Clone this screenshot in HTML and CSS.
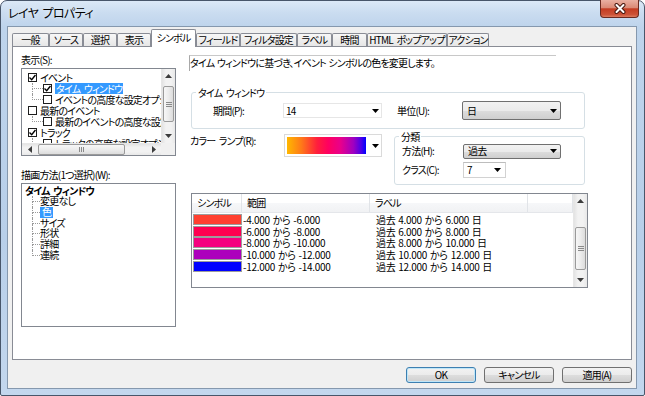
FILE: index.html
```html
<!DOCTYPE html>
<html lang="ja">
<head>
<meta charset="utf-8">
<title>レイヤ プロパティ</title>
<link rel="stylesheet" href="styles.css">
</head>
<body>
<div class="window">
  <div class="titlebar">
    <span class="title">レイヤ プロパティ</span>
    <div class="close">
      <svg width="14" height="11" viewBox="0 0 14 11"><path d="M3.5 2 L10.5 9 M10.5 2 L3.5 9" stroke="#4a1a12" stroke-width="4" stroke-linecap="round"/><path d="M3.5 2 L10.5 9 M10.5 2 L3.5 9" stroke="#fff" stroke-width="2" stroke-linecap="round"/></svg>
    </div>
  </div>
  <div class="client">
    <div class="tabs">
      <div class="tab tw37">一般</div>
      <div class="tab tw34">ソース</div>
      <div class="tab tw34">選択</div>
      <div class="tab tw34">表示</div>
      <div class="tab tw45 active">シンボル</div>
      <div class="tab tw44">フィールド</div>
      <div class="tab tw57">フィルタ設定</div>
      <div class="tab tw35">ラベル</div>
      <div class="tab tw35">時間</div>
      <div class="tab tw80">HTML ポップアップ</div>
      <div class="tab tw42">アクション</div>
    </div>
    <div class="panel">
      <div class="left">
        <div class="lbl lbl-show">表示(S):</div>
        <div class="list list-show">
          <div class="list-content lc1">
            <div class="row"><span class="cb"><svg width="7" height="7" viewBox="0 0 7 7"><path d="M0.5 3.5 L2.7 5.7 L6.5 1" fill="none" stroke="#000" stroke-width="1.4"/></svg></span><span class="txt">イベント</span></div>
            <div class="row"><span class="conn c1"><i class="ct"></i><i class="cbm"></i></span><span class="cb"><svg width="7" height="7" viewBox="0 0 7 7"><path d="M0.5 3.5 L2.7 5.7 L6.5 1" fill="none" stroke="#000" stroke-width="1.4"/></svg></span><span class="txt sel">タイム ウィンドウ</span></div>
            <div class="row"><span class="conn c1 last"><i class="ct"></i><i class="cbm"></i></span><span class="cb"></span><span class="txt">イベントの高度な設定オプション</span></div>
            <div class="row"><span class="cb"></span><span class="txt">最新のイベント</span></div>
            <div class="row"><span class="conn c1 last"><i class="ct"></i><i class="cbm"></i></span><span class="cb"></span><span class="txt">最新のイベントの高度な設定</span></div>
            <div class="row"><span class="cb"><svg width="7" height="7" viewBox="0 0 7 7"><path d="M0.5 3.5 L2.7 5.7 L6.5 1" fill="none" stroke="#000" stroke-width="1.4"/></svg></span><span class="txt">トラック</span></div>
            <div class="row"><span class="conn c1 last"><i class="ct"></i><i class="cbm"></i></span><span class="cb"></span><span class="txt">トラックの高度な設定オプション</span></div>
          </div>
          <div class="vscroll vs1">
            <div class="sb-btn"><svg width="7" height="4" viewBox="0 0 7 4"><path d="M0 4 L3.5 0 L7 4Z" fill="#3c3c3c"/></svg></div>
            <div class="sb-track"><div class="thumb vthumb th1"><span class="grip"></span></div></div>
            <div class="sb-btn"><svg width="7" height="4" viewBox="0 0 7 4"><path d="M0 0 L3.5 4 L7 0Z" fill="#3c3c3c"/></svg></div>
          </div>
          <div class="hscroll">
            <div class="sb-btn hb"><svg width="4" height="7" viewBox="0 0 4 7"><path d="M4 0 L0 3.5 L4 7Z" fill="#3c3c3c"/></svg></div>
            <div class="sb-track htrack"><div class="thumb hthumb"><span class="grip hgrip"></span></div></div>
            <div class="sb-btn hb"><svg width="4" height="7" viewBox="0 0 4 7"><path d="M0 0 L4 3.5 L0 7Z" fill="#3c3c3c"/></svg></div>
          </div>
          <div class="corner"></div>
        </div>
        <div class="lbl lbl-draw">描画方法(1つ選択)(W):</div>
        <div class="list list-draw">
          <div class="row2 root">タイム ウィンドウ</div>
          <div class="row2"><span class="conn c2"><i class="ct"></i><i class="cbm"></i></span><span class="txt">変更なし</span></div>
          <div class="row2"><span class="conn c2"><i class="ct"></i><i class="cbm"></i></span><span class="txt sel">色</span></div>
          <div class="row2"><span class="conn c2"><i class="ct"></i><i class="cbm"></i></span><span class="txt">サイズ</span></div>
          <div class="row2"><span class="conn c2"><i class="ct"></i><i class="cbm"></i></span><span class="txt">形状</span></div>
          <div class="row2"><span class="conn c2"><i class="ct"></i><i class="cbm"></i></span><span class="txt">詳細</span></div>
          <div class="row2"><span class="conn c2 last"><i class="ct"></i><i class="cbm"></i></span><span class="txt">連続</span></div>
        </div>
      </div>

      <div class="right">
        <div class="desc">タイム ウィンドウに基づき、イベント シンボルの色を変更します。</div>

        <fieldset class="grp g1">
          <legend>タイム ウィンドウ</legend>
          <div class="g1-body">
            <span class="flbl w70">期間(P):</span>
            <div class="combo c14"><span class="val">14</span><svg width="7" height="4" viewBox="0 0 7 4"><path d="M0 0 L3.5 4 L7 0Z" fill="#000"/></svg></div>
            <span class="flbl w65 ml15">単位(U):</span>
            <div class="combo cbtn cday"><span class="val">日</span><svg width="7" height="4" viewBox="0 0 7 4"><path d="M0 0 L3.5 4 L7 0Z" fill="#000"/></svg></div>
          </div>
        </fieldset>

        <div class="row-ramp">
          <span class="ramp-lbl">カラー ランプ(R):</span>
          <div class="ramp"><span class="ramp-sw"></span><svg width="7" height="4" viewBox="0 0 7 4"><path d="M0 0 L3.5 4 L7 0Z" fill="#000"/></svg></div>
          <fieldset class="grp g2">
            <legend>分類</legend>
            <div class="g2-body">
              <div class="frow">
                <span class="flbl w61">方法(H):</span>
                <div class="combo cbtn cpast"><span class="val">過去</span><svg width="7" height="4" viewBox="0 0 7 4"><path d="M0 0 L3.5 4 L7 0Z" fill="#000"/></svg></div>
              </div>
              <div class="frow frow2">
                <span class="flbl w61">クラス(C):</span>
                <div class="combo c7"><span class="val">7</span><svg width="7" height="4" viewBox="0 0 7 4"><path d="M0 0 L3.5 4 L7 0Z" fill="#000"/></svg></div>
              </div>
            </div>
          </fieldset>
        </div>

        <div class="table">
          <div class="tmain">
            <div class="thead">
              <div class="th">シンボル</div>
              <div class="th">範囲</div>
              <div class="th">ラベル</div>
              <div class="th"></div>
            </div>
            <div class="tbody">
              <div class="trow"><span class="sw sw1"></span><span class="rng">-4.000 から -6.000</span><span class="lab">過去 4.000 から 6.000 日</span></div>
              <div class="trow"><span class="sw sw2"></span><span class="rng">-6.000 から -8.000</span><span class="lab">過去 6.000 から 8.000 日</span></div>
              <div class="trow"><span class="sw sw3"></span><span class="rng">-8.000 から -10.000</span><span class="lab">過去 8.000 から 10.000 日</span></div>
              <div class="trow"><span class="sw sw4"></span><span class="rng">-10.000 から -12.000</span><span class="lab">過去 10.000 から 12.000 日</span></div>
              <div class="trow"><span class="sw sw5"></span><span class="rng">-12.000 から -14.000</span><span class="lab">過去 12.000 から 14.000 日</span></div>
            </div>
          </div>
          <div class="vscroll vs2">
            <div class="sb-btn"><svg width="7" height="4" viewBox="0 0 7 4"><path d="M0 4 L3.5 0 L7 4Z" fill="#3c3c3c"/></svg></div>
            <div class="sb-track"><div class="thumb vthumb th2"><span class="grip"></span></div></div>
            <div class="sb-btn"><svg width="7" height="4" viewBox="0 0 7 4"><path d="M0 0 L3.5 4 L7 0Z" fill="#3c3c3c"/></svg></div>
          </div>
        </div>
      </div>
    </div>
    <div class="buttons">
      <div class="btn default">OK</div>
      <div class="btn">キャンセル</div>
      <div class="btn">適用(A)</div>
    </div>
  </div>
</div>
</body>
</html>
```

FILE: styles.css
```css
* { box-sizing: border-box; }
html, body { margin: 0; padding: 0; }
body {
  width: 645px; height: 396px; overflow: hidden;
  font-family: "Noto Sans CJK JP", "Noto Sans", sans-serif;
  font-size: 10px;
  letter-spacing: -0.8px;
  word-spacing: 2px;
  font-feature-settings: "palt";
  color: #000;
  background: #fff;
}

.window {
  width: 645px; height: 396px;
  display: flex; flex-direction: column;
  padding: 0 7px 6px 6px;
  border: 1px solid #48566a;
  border-radius: 7px 7px 2px 2px;
  background: linear-gradient(180deg, #dce9f7 0px, #cadcf0 12px, #bed4ec 26px, #b8cfe9 60%, #c3d7ee 100%);
}

.titlebar { height: 25px; display: flex; align-items: flex-start; margin-right: -2px; }
.title {
  font-size: 12px; line-height: 14px; margin: 5px 0 0 1px;
  letter-spacing: -0.6px;
  text-shadow: 0 0 6px rgba(255,255,255,0.9);
}
.close {
  margin-left: auto; margin-top: -1px;
  width: 39px; height: 18px;
  border: 1px solid #6a2a20; border-top: none;
  border-radius: 0 0 4px 4px;
  background: linear-gradient(#eab0a2 0%, #db8a76 45%, #c43c22 52%, #cc5237 85%, #dd7a5e 100%);
  display: flex; align-items: center; justify-content: center;
}

.client {
  flex: 1;
  background: #f0f0f0;
  border: 1px solid #8598ae;
  padding: 2px 4px 0 4px;
  display: flex; flex-direction: column;
}

.tabs { display: flex; align-items: flex-end; height: 17px; }
.tab {
  height: 13px; line-height: 12px;
  text-align: center;
  border: 1px solid #898c95; border-bottom: none;
  border-radius: 2px 2px 0 0;
  background: linear-gradient(#f7f7f7, #e6e6e6);
  white-space: nowrap;
  flex: none;
}
.tab.active {
  height: 18px; line-height: 15px;
  background: #fff;
  position: relative; z-index: 1;
  margin-bottom: -1px;
}
.tw34 { width: 34px; }
.tw35 { width: 35px; }
.tw37 { width: 37px; }
.tw42 { width: 42px; }
.tw44 { width: 44px; }
.tw45 { width: 45px; }
.tw57 { width: 57px; }
.tw80 { width: 80px; }

.panel {
  height: 314px;
  border: 1px solid #898c95;
  background: #fff;
  display: flex;
  padding-left: 8px;
  gap: 13px;
}

.buttons { display: flex; justify-content: flex-end; gap: 8px; margin-top: 7px; }
.btn {
  width: 70px; height: 16px;
  border: 1px solid #707070; border-radius: 3px;
  background: linear-gradient(#f2f2f2 0%, #ebebeb 50%, #dddddd 51%, #cfcfcf 100%);
  text-align: center; line-height: 14px;
}
.btn.default { border-color: #3c7fb1; box-shadow: inset 0 0 0 1px #bfe6f8; }

/* left column */
.left { width: 155px; display: flex; flex-direction: column; }
.lbl { line-height: 12px; white-space: nowrap; }
.lbl-show { margin-top: 7px; }
.lbl-draw { margin-top: 13px; }
.list { border: 1px solid #828790; background: #fff; margin-top: 2px; }
.list-show {
  height: 88px;
  display: grid;
  grid-template-columns: 1fr 14px;
  grid-template-rows: 1fr 12px;
}
.list-content { overflow: hidden; min-width: 0; min-height: 0; }
.lc1 { padding: 3px 0 0 6px; }
.row { display: flex; align-items: center; height: 11px; white-space: nowrap; }
.cb {
  width: 9px; height: 9px; flex: none;
  border: 1px solid #1e1e1e; background: #fff;
  margin-right: 3px;
  display: flex; align-items: center; justify-content: center;
}
.txt { line-height: 11px; }
.txt.sel { background: #3399ff; color: #fff; padding: 0 1px; }
.conn { display: flex; flex-direction: column; flex: none; height: 100%; }
.conn .ct { height: 6px; border-left: 1px dotted #9a9a9a; border-bottom: 1px dotted #9a9a9a; }
.conn .cbm { flex: 1; border-left: 1px dotted #9a9a9a; }
.conn.last .cbm { border-left: none; }
.c1 { width: 11px; margin-left: 4px; }
.c2 { width: 8px; margin-left: 7px; }

.list-draw { height: 144px; padding: 1.5px 0 0 3px; }
.row2 { display: flex; align-items: center; height: 10.7px; white-space: nowrap; line-height: 10.7px; }
.row2 .txt { line-height: 10.7px; }
.row2 .txt.sel { padding: 0 2px; }
.row2.root { font-weight: bold; }

/* scrollbars */
.vscroll {
  display: flex; flex-direction: column;
  background: linear-gradient(90deg, #e3e3e3, #f2f2f2 30%, #f2f2f2 70%, #e8e8e8);
  border-left: 1px solid #e6e6e6;
}
.sb-btn { height: 14px; flex: none; display: flex; align-items: center; justify-content: center; }
.sb-track { flex: 1; display: flex; flex-direction: column; }
.thumb {
  border: 1px solid #9a9a9a; border-radius: 2px;
  display: flex; align-items: center; justify-content: center;
}
.vthumb { margin: 0 1px; background: linear-gradient(90deg, #f7f7f7, #ececec 50%, #dcdcdc); }
.th1 { margin-top: 3px; height: 36px; }
.th2 { margin-top: 19px; height: 43px; }
.grip {
  width: 6px; height: 5px;
  background: repeating-linear-gradient(#8a8a8a 0 1px, transparent 1px 2px);
}
.hscroll {
  display: flex;
  background: linear-gradient(#e3e3e3, #f2f2f2 30%, #f2f2f2 70%, #e8e8e8);
  border-top: 1px solid #e6e6e6;
}
.hb { width: 15px; height: auto; }
.htrack { flex-direction: row; }
.hthumb { margin: 0 0 0 1px; width: 87px; background: linear-gradient(#f7f7f7, #ececec 50%, #dcdcdc); }
.hgrip { width: 5px; height: 5px; background: repeating-linear-gradient(90deg, #8a8a8a 0 1px, transparent 1px 2px); }
.corner { background: #f0f0f0; }

/* right column */
.right { width: 399px; display: flex; flex-direction: column; }
.desc {
  margin-top: 8px;
  width: 367px; height: 16px;
  border-top: 1px solid #c8c8c8; border-left: 1px solid #a8a8a8;
  line-height: 13px; white-space: nowrap;
  word-spacing: 1px;
}

.grp {
  margin: 0; padding: 0;
  border: 1px solid #d5dfe5; border-radius: 3px;
  min-width: 0;
}
.grp legend { margin-left: 4px; padding: 0 2px; line-height: 13px; }
.g1 { margin: 15px 0 0 2px; width: 394px; }
.g1-body { display: flex; align-items: center; height: 19px; margin: 2px 0 8px 0; padding-left: 21px; }
.flbl { white-space: nowrap; line-height: 12px; flex: none; }
.w70 { width: 70px; }
.w65 { width: 65px; }
.w61 { width: 61px; }
.ml15 { margin-left: 15px; }

.combo { display: flex; align-items: center; flex: none; }
.combo .val { flex: 1; line-height: 12px; }
.c14 { width: 99px; height: 15px; border: 1px solid #e6e6e6; padding: 0 2px 0 2px; }
.cbtn {
  border: 1px solid #707070; border-radius: 2px;
  background: linear-gradient(#f2f2f2 0%, #ebebeb 50%, #dddddd 51%, #cfcfcf 100%);
  padding: 0 3px 0 4px;
}
.cday { width: 99px; height: 19px; }
.cpast { width: 98px; height: 15px; }
.c7 { width: 43px; height: 16px; border: 1px solid #d2d2d2; border-top-color: #bdbdbd; padding: 0 4px 0 3px; }

.row-ramp { display: flex; align-items: flex-start; margin-top: 1px; }
.ramp-lbl { width: 95px; margin-top: 5px; line-height: 12px; padding-left: 1px; white-space: nowrap; flex: none; }
.ramp {
  width: 98px; height: 23px; margin-top: 4px; flex: none;
  border: 1px solid #dadada; padding: 2px;
  display: flex; align-items: center; justify-content: space-between;
}
.ramp-sw {
  width: 79px; height: 17px;
  background: linear-gradient(90deg, #ffb800 0%, #ff7a18 18%, #ff1f3c 38%, #ff0060 52%, #e8008c 68%, #a000c0 84%, #4a00e8 94%, #0000ff 100%);
}
.g2 { margin-left: 12px; width: 191px; }
.g2-body { padding: 0 0 6px 7px; }
.frow { display: flex; align-items: center; height: 16px; }
.frow2 { margin-top: 3px; }

/* table */
.table {
  margin: 8px 0 0 2px;
  width: 397px; height: 95px;
  border: 1px solid #828790;
  display: flex;
}
.tmain { flex: 1; display: flex; flex-direction: column; min-width: 0; }
.thead {
  display: grid;
  grid-template-columns: 50px 128px 158px 45px;
  height: 19px;
  background: linear-gradient(#ffffff 0%, #ffffff 50%, #f6f7f9 51%, #f1f2f4 100%);
  border-bottom: 1px solid #e4e6ea;
}
.th { border-right: 1px solid #e1e4e8; line-height: 18px; padding-left: 5px; white-space: nowrap; }
.tbody { padding-top: 1px; }
.trow {
  display: grid;
  grid-template-columns: 50px 128px 158px;
  height: 11.6px;
  align-items: center;
  letter-spacing: -0.3px;
  word-spacing: 1px;
  white-space: nowrap;
}
.sw { display: block; margin-left: 1px; height: 11px; border: 1px solid #9c9c9c; }
.sw1 { background: #ff4030; }
.sw2 { background: #ff0050; }
.sw3 { background: #f5007f; }
.sw4 { background: #ac00bc; }
.sw5 { background: #0000ff; }
.rng { padding-left: 1px; line-height: 11px; }
.lab { padding-left: 6px; line-height: 11px; }
.vs2 { width: 14px; flex: none; border-left: 1px solid #e6e6e6; }
```
